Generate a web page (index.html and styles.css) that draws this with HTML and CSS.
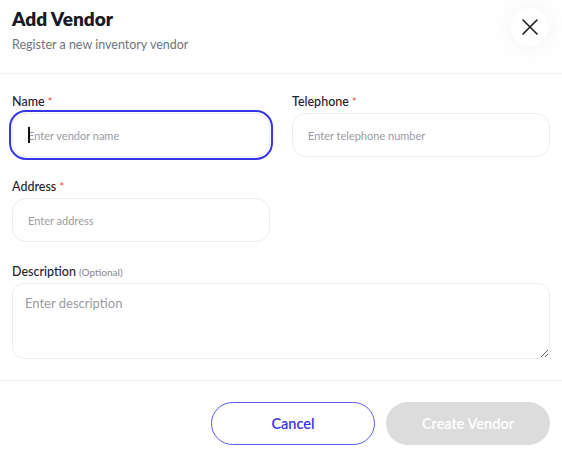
FILE: index.html
```html
<!DOCTYPE html>
<html lang="en">
<head>
<meta charset="UTF-8">
<meta name="viewport" content="width=device-width, initial-scale=1.0">
<title>Add Vendor</title>
<link rel="stylesheet" href="styles.css">
</head>
<body>
  <div class="modal">
    <div class="modal-header">
      <div>
        <h2 class="modal-title">Add Vendor</h2>
        <p class="modal-sub">Register a new inventory vendor</p>
      </div>
      <button class="close-btn" aria-label="Close">
        <svg width="18" height="18" viewBox="0 0 18 18" fill="none" stroke="#1d1d1f" stroke-width="1.6" stroke-linecap="round">
          <path d="M2 2L16 16M16 2L2 16"/>
        </svg>
      </button>
    </div>

    <form class="modal-body">
      <div class="field">
        <label for="vendorName">Name <span class="req">*</span></label>
        <div class="input-wrap">
          <input type="text" id="vendorName" class="input is-focused" placeholder="Enter vendor name">
          <span class="caret"></span>
        </div>
      </div>

      <div class="field">
        <label for="vendorPhone">Telephone <span class="req">*</span></label>
        <input type="text" id="vendorPhone" class="input" placeholder="Enter telephone number">
      </div>

      <div class="field">
        <label for="vendorAddress">Address <span class="req">*</span></label>
        <input type="text" id="vendorAddress" class="input" placeholder="Enter address">
      </div>

      <div class="field field-wide">
        <label for="vendorDesc">Description <span class="opt">(Optional)</span></label>
        <textarea id="vendorDesc" class="input textarea" placeholder="Enter description"></textarea>
      </div>
    </form>

    <div class="modal-footer">
      <button class="btn btn-outline">Cancel</button>
      <button class="btn btn-primary" disabled>Create Vendor</button>
    </div>
  </div>
</body>
</html>
```

FILE: styles.css
```css
body {
  margin: 0;
  background: #fff;
  font-family: 'Lato', 'Inter', sans-serif;
  color: #1c1f2a;
}
.modal {
  width: 562px;
}
.modal-header {
  display: flex;
  justify-content: space-between;
  align-items: flex-start;
  padding: 6px 12px 0 12px;
  height: 67px;
  border-bottom: 1px solid #f0f0f2;
}
.modal-title {
  margin: 0;
  font-size: 19px;
  font-weight: 800;
  line-height: 26px;
  color: #171a26;
}
.modal-sub {
  margin: 5px 0 0;
  font-size: 12.5px;
  color: #70747e;
}
.close-btn {
  width: 38px;
  height: 38px;
  margin-top: 2px;
  margin-right: 1px;
  border: none;
  border-radius: 50%;
  background: #fff;
  box-shadow: 0 0 22px 6px rgba(0, 0, 0, 0.035);
  display: flex;
  align-items: center;
  justify-content: center;
  cursor: pointer;
  padding: 0;
}
.modal-body {
  display: grid;
  grid-template-columns: 258px 258px;
  column-gap: 22px;
  row-gap: 22px;
  padding: 20px 12px 21px;
  border-bottom: 1px solid #ececee;
}
.field {
  display: flex;
  flex-direction: column;
  gap: 3px;
}
.field-wide {
  grid-column: 1 / 3;
}
.field label {
  font-size: 12.5px;
  font-weight: 500;
  color: #1f2230;
  line-height: 16px;
}
.req {
  color: #ef4a4a;
  font-size: 11px;
}
.opt {
  color: #8b8e96;
  font-size: 10px;
}
.input {
  box-sizing: border-box;
  width: 100%;
  height: 44px;
  border: 1px solid #ededf0;
  border-radius: 14px;
  padding: 0 15px;
  font-family: inherit;
  font-size: 11px;
  color: #222;
  background: #fff;
  outline: none;
}
.input::placeholder {
  color: #9a9ca3;
}
.input-wrap {
  position: relative;
}
.input.is-focused {
  outline: 2px solid #3535ee;
  outline-offset: 1px;
}
.caret {
  position: absolute;
  left: 16px;
  top: 14px;
  width: 1.5px;
  height: 16px;
  background: #111;
}
.textarea {
  height: 76px;
  padding: 11px 12px;
  font-size: 13px;
  border-radius: 12px;
  resize: vertical;
}
.modal-footer {
  display: flex;
  justify-content: flex-end;
  gap: 11px;
  padding: 21px 12px;
}
.btn {
  width: 164px;
  height: 43px;
  border-radius: 22px;
  font-family: inherit;
  font-size: 14.5px;
  font-weight: 600;
  cursor: pointer;
}
.btn-outline {
  background: #fff;
  border: 1px solid #5a5af2;
  color: #3434e6;
}
.btn-primary {
  background: #dcdcdc;
  border: none;
  color: #fff;
}
```
